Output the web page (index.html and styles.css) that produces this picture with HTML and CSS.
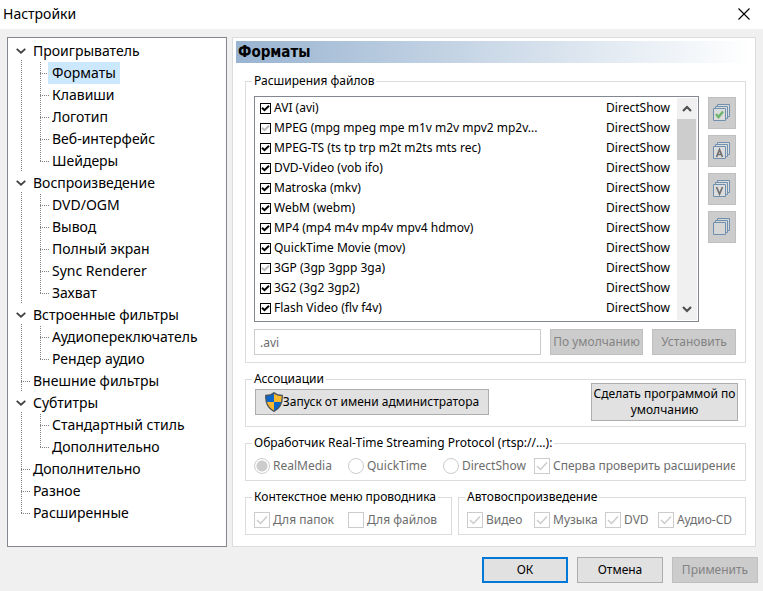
FILE: index.html
```html
<!DOCTYPE html>
<html lang="ru">
  <head>
    <meta charset="utf-8">
    <meta name="viewport" content="width=device-width, initial-scale=1.0">
    <title>Настройки</title>
    <link rel="stylesheet" href="styles.css">
  </head>
  <body>
    <header class="titlebar">
      <h1>Настройки</h1>
      <button class="close" aria-label="Закрыть">
        <svg width="12" height="12" viewBox="0 0 12 12"><path d="M0.5 0.5L11.5 11.5M11.5 0.5L0.5 11.5" stroke="#000" stroke-width="1.1" fill="none"/></svg>
      </button>
    </header>

    <main class="content">
      <nav class="tree">
        <ul class="roots">
          <li class="open">
            <div class="row"><button class="toggle" aria-label="Свернуть"><svg width="10" height="6" viewBox="0 0 10 6"><path d="M0.7 0.9L5 4.7L9.3 0.9" stroke="#404040" stroke-width="1.8" fill="none"/></svg></button><a href="#">Проигрыватель</a></div>
            <ul class="children">
              <li><a class="selected" href="#">Форматы</a></li>
              <li><a href="#">Клавиши</a></li>
              <li><a href="#">Логотип</a></li>
              <li><a href="#">Веб-интерфейс</a></li>
              <li><a href="#">Шейдеры</a></li>
            </ul>
          </li>
          <li class="open">
            <div class="row"><button class="toggle" aria-label="Свернуть"><svg width="10" height="6" viewBox="0 0 10 6"><path d="M0.7 0.9L5 4.7L9.3 0.9" stroke="#404040" stroke-width="1.8" fill="none"/></svg></button><a href="#">Воспроизведение</a></div>
            <ul class="children">
              <li><a href="#">DVD/OGM</a></li>
              <li><a href="#">Вывод</a></li>
              <li><a href="#">Полный экран</a></li>
              <li><a href="#">Sync Renderer</a></li>
              <li><a href="#">Захват</a></li>
            </ul>
          </li>
          <li class="open">
            <div class="row"><button class="toggle" aria-label="Свернуть"><svg width="10" height="6" viewBox="0 0 10 6"><path d="M0.7 0.9L5 4.7L9.3 0.9" stroke="#404040" stroke-width="1.8" fill="none"/></svg></button><a href="#">Встроенные фильтры</a></div>
            <ul class="children">
              <li><a href="#">Аудиопереключатель</a></li>
              <li><a href="#">Рендер аудио</a></li>
            </ul>
          </li>
          <li class="leaf"><div class="row"><a href="#">Внешние фильтры</a></div></li>
          <li class="open">
            <div class="row"><button class="toggle" aria-label="Свернуть"><svg width="10" height="6" viewBox="0 0 10 6"><path d="M0.7 0.9L5 4.7L9.3 0.9" stroke="#404040" stroke-width="1.8" fill="none"/></svg></button><a href="#">Субтитры</a></div>
            <ul class="children">
              <li><a href="#">Стандартный стиль</a></li>
              <li><a href="#">Дополнительно</a></li>
            </ul>
          </li>
          <li class="leaf"><div class="row"><a href="#">Дополнительно</a></div></li>
          <li class="leaf"><div class="row"><a href="#">Разное</a></div></li>
          <li class="leaf"><div class="row"><a href="#">Расширенные</a></div></li>
        </ul>
      </nav>

      <section class="panel">
        <h2>Форматы</h2>
        <div class="groups">
          <fieldset class="extensions">
            <legend>Расширения файлов</legend>
            <div class="formats">
              <div class="list">
                <table>
                  <tr><td><label><input type="checkbox" checked>AVI (avi)</label></td><td>DirectShow</td></tr>
                  <tr><td><label><input type="checkbox" class="partial" checked>MPEG (mpg mpeg mpe m1v m2v mpv2 mp2v...</label></td><td>DirectShow</td></tr>
                  <tr><td><label><input type="checkbox" checked>MPEG-TS (ts tp trp m2t m2ts mts rec)</label></td><td>DirectShow</td></tr>
                  <tr><td><label><input type="checkbox" checked>DVD-Video (vob ifo)</label></td><td>DirectShow</td></tr>
                  <tr><td><label><input type="checkbox" checked>Matroska (mkv)</label></td><td>DirectShow</td></tr>
                  <tr><td><label><input type="checkbox" checked>WebM (webm)</label></td><td>DirectShow</td></tr>
                  <tr><td><label><input type="checkbox" checked>MP4 (mp4 m4v mp4v mpv4 hdmov)</label></td><td>DirectShow</td></tr>
                  <tr><td><label><input type="checkbox" checked>QuickTime Movie (mov)</label></td><td>DirectShow</td></tr>
                  <tr><td><label><input type="checkbox" class="partial" checked>3GP (3gp 3gpp 3ga)</label></td><td>DirectShow</td></tr>
                  <tr><td><label><input type="checkbox" checked>3G2 (3g2 3gp2)</label></td><td>DirectShow</td></tr>
                  <tr><td><label><input type="checkbox" checked>Flash Video (flv f4v)</label></td><td>DirectShow</td></tr>
                </table>
                <div class="scrollbar">
                  <button aria-label="Вверх"><svg width="10" height="7" viewBox="0 0 10 7"><path d="M1 6L5 2L9 6" stroke="#505050" stroke-width="2.2" fill="none"/></svg></button>
                  <div class="thumb"></div>
                  <button aria-label="Вниз"><svg width="10" height="7" viewBox="0 0 10 7"><path d="M1 1L5 5L9 1" stroke="#505050" stroke-width="2.2" fill="none"/></svg></button>
                </div>
              </div>
              <div class="tools">
                <button disabled aria-label="Все"><svg width="18" height="18" viewBox="0 0 18 18"><g fill="#dcdcdc" stroke="#7090b0"><path d="M4.5 0.5h12v12h-12z"/><path d="M2.5 2.5h12v12h-12z"/><path d="M0.5 4.5h12v12h-12z"/></g><path d="M3 10L5.5 13L10 7.5" stroke="#6db56d" stroke-width="2.4" fill="none"/></svg></button>
                <button disabled aria-label="Аудио"><svg width="18" height="18" viewBox="0 0 18 18"><g fill="#dcdcdc" stroke="#7090b0"><path d="M4.5 0.5h12v12h-12z"/><path d="M2.5 2.5h12v12h-12z"/><path d="M0.5 4.5h12v12h-12z"/></g><path d="M3.5 15L6.5 7.5L9.5 15M4.5 12.5H8.5" stroke="#707070" stroke-width="1.7" fill="none"/></svg></button>
                <button disabled aria-label="Видео"><svg width="18" height="18" viewBox="0 0 18 18"><g fill="#dcdcdc" stroke="#7090b0"><path d="M4.5 0.5h12v12h-12z"/><path d="M2.5 2.5h12v12h-12z"/><path d="M0.5 4.5h12v12h-12z"/></g><path d="M3.5 7L6.5 14L9.5 7" stroke="#707070" stroke-width="1.7" fill="none"/></svg></button>
                <button disabled aria-label="Снять все"><svg width="18" height="18" viewBox="0 0 18 18"><g fill="#d6d6d6" stroke="#7090b0"><path d="M4.5 0.5h12v12h-12z"/><path d="M2.5 2.5h12v12h-12z"/><path d="M0.5 4.5h12v12h-12z"/></g></svg></button>
              </div>
            </div>
            <div class="edit">
              <input type="text" value=".avi" aria-label="Расширения" disabled>
              <button class="btn default" disabled>По умолчанию</button>
              <button class="btn set" disabled>Установить</button>
            </div>
          </fieldset>

          <fieldset class="assoc">
            <legend>Ассоциации</legend>
            <div class="actions">
              <button class="btn admin">
                <svg width="18" height="20" viewBox="0 0 18 20">
                  <path d="M9 0.7C7 2.5 4 3.4 0.8 3.4C0.4 10 2 16 9 19.3C16 16 17.6 10 17.2 3.4C14 3.4 11 2.5 9 0.7Z" fill="#fdb92c"/>
                  <path d="M9 0.7C7 2.5 4 3.4 0.8 3.4C0.7 6 0.9 8 1.5 10H9Z" fill="#0d66c8"/>
                  <path d="M9 19.3C13 17.4 15.5 14.5 16.5 10H9Z" fill="#0d66c8"/>
                  <path d="M9 0.7C7 2.5 4 3.4 0.8 3.4C0.4 10 2 16 9 19.3C16 16 17.6 10 17.2 3.4C14 3.4 11 2.5 9 0.7Z" fill="none" stroke="#4a5560" stroke-width="1.3"/>
                </svg>Запуск от имени администратора
              </button>
              <button class="btn program">Сделать программой по умолчанию</button>
            </div>
          </fieldset>

          <fieldset class="rtsp">
            <legend>Обработчик Real-Time Streaming Protocol (rtsp://...):</legend>
            <div class="options">
              <label><input type="radio" name="rtsp" checked disabled>RealMedia</label>
              <label><input type="radio" name="rtsp" disabled>QuickTime</label>
              <label><input type="radio" name="rtsp" disabled>DirectShow</label>
              <label><input type="checkbox" checked disabled>Сперва проверить расширение</label>
            </div>
          </fieldset>

          <div class="pair">
            <fieldset class="context">
              <legend>Контекстное меню проводника</legend>
              <div class="options">
                <label><input type="checkbox" checked disabled>Для папок</label>
                <label><input type="checkbox" disabled>Для файлов</label>
              </div>
            </fieldset>
            <fieldset class="autoplay">
              <legend>Автовоспроизведение</legend>
              <div class="options">
                <label><input type="checkbox" checked disabled>Видео</label>
                <label><input type="checkbox" checked disabled>Музыка</label>
                <label><input type="checkbox" checked disabled>DVD</label>
                <label><input type="checkbox" checked disabled>Аудио-CD</label>
              </div>
            </fieldset>
          </div>
        </div>
      </section>
    </main>

    <footer class="footer">
      <button class="btn ok">ОК</button>
      <button class="btn">Отмена</button>
      <button class="btn" disabled>Применить</button>
    </footer>
  </body>
</html>
```
FILE: styles.css
```css
* {
  box-sizing: border-box;
}
body {
  display: flex;
  flex-direction: column;
  min-height: 100vh;
  margin: 0;
  background: #f0f0f0;
  color: #000;
  font: 12px/16px "Noto Sans", Tahoma, sans-serif;
}
h1, h2, ul {
  margin: 0;
  padding: 0;
  list-style: none;
}
button, input {
  margin: 0;
  padding: 0;
  font: inherit;
  color: inherit;
}

.titlebar {
  display: flex;
  align-items: center;
  justify-content: space-between;
  height: 29px;
  padding: 0 13px 2px 3px;
  background: #fff;
}
.titlebar h1 {
  font: 14px/20px "Noto Sans", "Segoe UI", sans-serif;
}
.close {
  display: flex;
  border: 0;
  background: none;
}

.content {
  display: grid;
  grid-template-columns: 220px 1fr;
  gap: 5px;
  padding: 8px 7px 0;
}

/* tree */
.tree {
  padding: 2px 0;
  border: 1px solid #828790;
  background: #fff;
  font: 14px/22px "Noto Sans", "Segoe UI", sans-serif;
}
.tree a {
  padding: 0 4px;
  color: inherit;
  text-decoration: none;
}
.roots > li {
  --dots-y: repeating-linear-gradient(#808080 0 1px, transparent 1px 2px);
  --dots-x: repeating-linear-gradient(90deg, #808080 0 1px, transparent 1px 2px);
  padding-left: 21px;
  background: var(--dots-y) 13px 0 / 1px 100% no-repeat;
}
.roots > .open {
  background-position: 13px 20px;
}
.roots > .leaf {
  background: var(--dots-y) 13px 0 / 1px 100% no-repeat, var(--dots-x) 13px 11px / 9px 1px no-repeat;
}
.roots > .leaf:last-child {
  background-size: 1px 12px, 9px 1px;
}
.row {
  display: flex;
}
.toggle {
  display: flex;
  align-items: center;
  width: 13px;
  margin-left: -13px;
  border: 0;
  background: none;
}
.children li {
  display: flex;
  padding-left: 19px;
  background: var(--dots-y) 11px 0 / 1px 100% no-repeat, var(--dots-x) 11px 11px / 9px 1px no-repeat;
}
.children li:last-child {
  background-size: 1px 12px, 9px 1px;
}
.tree .selected {
  background: #cce8ff;
}

/* page */
.panel {
  padding: 3px;
  border: 1px solid #dcdcdc;
  background: #fff;
}
.panel h2 {
  padding: 0 2px;
  background: linear-gradient(90deg, #99b4d1, #fff);
  font: bold 15px/22px "DejaVu Sans Condensed", Tahoma, sans-serif;
}
.groups {
  display: grid;
  gap: 8px;
  padding: 10px 6px 8px 9px;
}
fieldset {
  min-width: 0;
  margin: 0;
  padding: 0 8px;
  border: 1px solid #dcdcdc;
}
legend {
  margin-left: -2px;
  padding: 0 2px;
}

.extensions {
  padding: 7px 9px 7px 8px;
}
.formats {
  display: grid;
  grid-template-columns: 1fr 28px;
  gap: 9px;
}
.list {
  display: flex;
  padding: 1px;
  border: 1px solid #828790;
}
.list table {
  flex: 1;
  align-self: flex-start;
  border-collapse: collapse;
}
.list td {
  height: 20px;
  padding: 0 7px 0 4px;
}
.list td:last-child {
  text-align: right;
}
.list label {
  display: flex;
  align-items: center;
  gap: 3px;
}
.list input {
  appearance: none;
  width: 11px;
  height: 11px;
  border: 1px solid #000;
  background: url("data:image/svg+xml,%3Csvg xmlns='http://www.w3.org/2000/svg' viewBox='0 0 9 9'%3E%3Cpath d='M1 3.7L3.5 6.2L8 1.7' stroke='%23000' stroke-width='2' fill='none'/%3E%3C/svg%3E");
}
.list .partial {
  background: url("data:image/svg+xml,%3Csvg xmlns='http://www.w3.org/2000/svg' viewBox='0 0 9 9'%3E%3Cpath d='M1 3.7L3.5 6.2L8 1.7' stroke='%23b8b8b8' stroke-width='2' fill='none'/%3E%3C/svg%3E");
}
.scrollbar {
  display: flex;
  flex-direction: column;
  width: 20px;
  background: #f0f0f0;
}
.scrollbar button {
  display: flex;
  align-items: center;
  justify-content: center;
  height: 21px;
  border: 0;
  background: none;
}
.scrollbar .thumb {
  height: 41px;
  margin: 0 1px 0 0;
  background: #cdcdcd;
}
.scrollbar button:last-child {
  margin-top: auto;
}
.tools {
  display: grid;
  align-content: start;
  gap: 6px;
  height: 226px;
  padding-top: 1px;
}
.tools button {
  display: flex;
  align-items: center;
  justify-content: center;
  height: 32px;
  border: 1px solid #bfbfbf;
  background: #ccc;
}
.edit {
  display: flex;
  gap: 9px;
  margin-top: 7px;
}
.edit input {
  flex: 1;
  min-width: 0;
  height: 26px;
  padding: 0 5px;
  border: 1px solid #ccc;
  background: #fff;
  color: #6d6d6d;
}

.btn {
  min-height: 26px;
  border: 1px solid #adadad;
  background: #e1e1e1;
}
.btn:disabled {
  border-color: #bfbfbf;
  background: #ccc;
  color: #838383;
}
.default {
  width: 93px;
}
.set {
  width: 84px;
}

.assoc {
  padding: 0 7px 0 8px;
}
.actions {
  display: flex;
  align-items: center;
  justify-content: space-between;
  margin: -4px 0 5px;
  padding-left: 1px;
}
.admin {
  display: flex;
  align-items: center;
  justify-content: center;
  width: 234px;
}
.program {
  width: 147px;
  height: 38px;
}

.options {
  display: flex;
  padding: 7px 0 6px;
  color: #6d6d6d;
  white-space: nowrap;
}
.options label {
  display: flex;
  align-items: center;
  gap: 3px;
  overflow: hidden;
}
.options input {
  flex: none;
  appearance: none;
  width: 16px;
  height: 16px;
  border: 1px solid #ccc;
}
.options input:checked {
  background: url("data:image/svg+xml,%3Csvg xmlns='http://www.w3.org/2000/svg' viewBox='0 0 14 14'%3E%3Cpath d='M2 7L5.5 10.5L12 3.5' stroke='%23ccc' stroke-width='1.5' fill='none'/%3E%3C/svg%3E");
}
.options input[type="radio"] {
  border-radius: 50%;
}
.options input[type="radio"]:checked {
  background: radial-gradient(circle, #ccc 5px, #fff 6px);
}
.rtsp {
  padding-right: 10px;
}
.rtsp .options {
  display: grid;
  grid-template-columns: 94px 95px 91px 1fr;
}
.pair {
  display: grid;
  grid-template-columns: 207px 1fr;
  gap: 6px;
}
.context .options {
  display: grid;
  grid-template-columns: 94px 1fr;
}
.autoplay .options {
  display: grid;
  grid-template-columns: 67px 71px 53px 1fr;
}

.footer {
  display: flex;
  justify-content: flex-end;
  gap: 9px;
  padding: 10px 5px 8px;
}
.footer .btn {
  width: 86px;
}
.ok {
  border: 2px solid #0078d7;
}
```
